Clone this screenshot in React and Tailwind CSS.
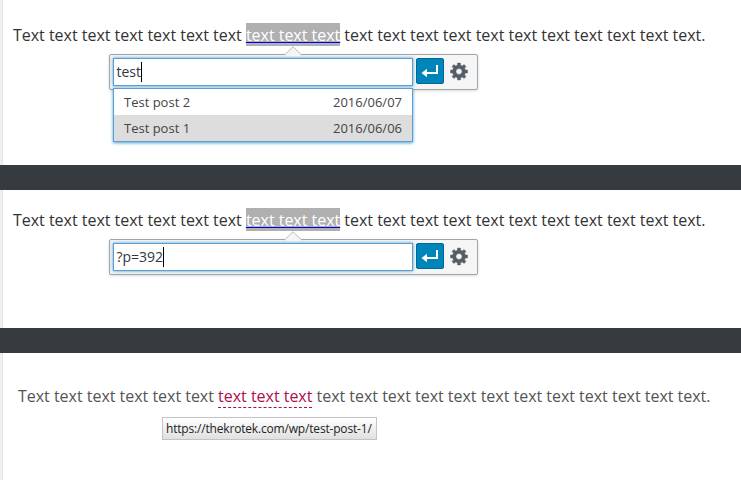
const font = "font-['Open_Sans','Noto_Sans',sans-serif]";

function words(n) {
  return Array(n).fill("text").join(" ");
}

function ReturnIcon() {
  return (
    <svg width="18" height="14" viewBox="0 0 18 14" fill="none">
      <path d="M16 1v8H5" stroke="#fff" strokeWidth="2" />
      <path d="M0.5 9 6 4.8v8.4z" fill="#fff" />
    </svg>
  );
}

function GearIcon() {
  return (
    <svg width="20" height="20" viewBox="0.5 0 20 20" fill="#555d66" stroke="#555d66" strokeWidth="0.4">
      <path d="M18 12h-2.18c-.17.7-.44 1.35-.81 1.93l1.54 1.54-2.1 2.1-1.54-1.54c-.58.36-1.23.63-1.91.79V19H8v-2.18c-.68-.16-1.33-.43-1.91-.79l-1.54 1.54-2.12-2.12 1.54-1.54c-.36-.58-.63-1.23-.79-1.91H1V9.03h2.17c.16-.7.44-1.35.8-1.94L2.43 5.55l2.1-2.1 1.54 1.54c.58-.37 1.24-.64 1.93-.81V2h3v2.18c.68.16 1.33.43 1.91.79l1.54-1.54 2.12 2.12-1.54 1.54c.36.59.64 1.24.8 1.94H18V12zm-8.5 1.5c1.66 0 3-1.34 3-3s-1.34-3-3-3-3 1.34-3 3 1.34 3 3 3z" />
    </svg>
  );
}

function SelectedLine() {
  return (
    <p className="ml-[10px] text-[16px] leading-6 tracking-[-0.02px] whitespace-nowrap text-[#333]">
      Text {words(6)}{" "}
      <span className="bg-[#b0b0b0] pt-px text-white underline decoration-[#0000ee] decoration-1 underline-offset-1">
        {words(3)}
      </span>{" "}
      {words(11)}.
    </p>
  );
}

function LinkPopup({ value, results }) {
  return (
    <div className="relative mt-[7px] ml-[106px] flex h-[36px] w-[369px] rounded-[2px] border border-[#a0a5aa] bg-[#f5f5f5] pt-[3px] pl-[3px] shadow-[0_1px_3px_rgba(0,0,0,0.15)]">
      <svg className="absolute -top-[9px] left-[174px]" width="18" height="10" viewBox="0 0 18 10">
        <path d="M0.5 9 9 0.7 17.5 9" fill="#f5f5f5" stroke="#b4b9be" />
        <path d="M1.5 9.2h15" stroke="#f5f5f5" strokeWidth="1.6" />
      </svg>
      <div className="flex h-[28px] w-[300px] items-start border border-[#5b9dd9] bg-white pt-[3px] pl-[2.5px] text-[14px] leading-5 text-[#32373c] shadow-[0_0_3px_rgba(30,140,190,0.8)]">
        <span>{value}</span>
        <span className="-ml-[0.5px] h-[20px] w-px bg-black" />
      </div>
      <button className="ml-[3px] flex h-[26px] w-[28px] items-center justify-center rounded-[2px] border border-[#006799] bg-[#0085ba]">
        <ReturnIcon />
      </button>
      <button className="ml-[6px] flex h-[26px] w-[20px] items-center justify-center">
        <GearIcon />
      </button>
      {results && (
        <ul className="absolute top-[33px] left-[3px] w-[300px] border border-[#5b9dd9] bg-white text-[13px] leading-[26px] text-[#444] shadow-[0_1px_3px_rgba(30,140,190,0.8)]">
          {results.map(([title, date], i) => (
            <li key={title} className={i === 1 ? "flex justify-between bg-[#ddd] px-[10px]" : "flex justify-between px-[10px]"}>
              <span>{title}</span>
              <span>{date}</span>
            </li>
          ))}
        </ul>
      )}
    </div>
  );
}

export default function App() {
  return (
    <main className={`flex h-[480px] w-[741px] flex-col overflow-hidden bg-white ${font}`}>
      <section className="h-[165px] border-l-2 border-[#f0f0f0]">
        <div className="h-full border-l border-[#e5e5e5] pt-[23px]">
          <SelectedLine />
          <LinkPopup value="test" results={[["Test post 2", "2016/06/07"], ["Test post 1", "2016/06/06"]]} />
        </div>
      </section>
      <div className="h-[25px] bg-[#363b3f]" />
      <section className="h-[138px] border-l-2 border-[#f0f0f0]">
        <div className="h-full border-l border-[#e5e5e5] pt-[18px]">
          <SelectedLine />
          <LinkPopup value="?p=392" />
        </div>
      </section>
      <div className="h-[25px] bg-[#363b3f]" />
      <section className="h-[127px] border-l-2 border-[#f0f0f0]">
        <div className="h-full border-l border-[#e5e5e5]">
          <p className="ml-[15px] pt-[31px] text-[16px] leading-6 tracking-[-0.02px] whitespace-nowrap text-[#555]">
            Text {words(5)}{" "}
            <span className="border-b border-dashed border-[#ad0f51] text-[#ad0f51]">{words(3)}</span>{" "}
            {words(12)}.
          </p>
          <div className="mt-[9px] ml-[159px] flex h-[23px] w-[215px] items-center border border-[#c3c3c3] bg-linear-to-b from-white to-[#e0e0e0] pl-[3px] text-[12px] tracking-[-0.18px] whitespace-nowrap text-[#222]">
            https://thekrotek.com/wp/test-post-1/
          </div>
        </div>
      </section>
    </main>
  );
}
